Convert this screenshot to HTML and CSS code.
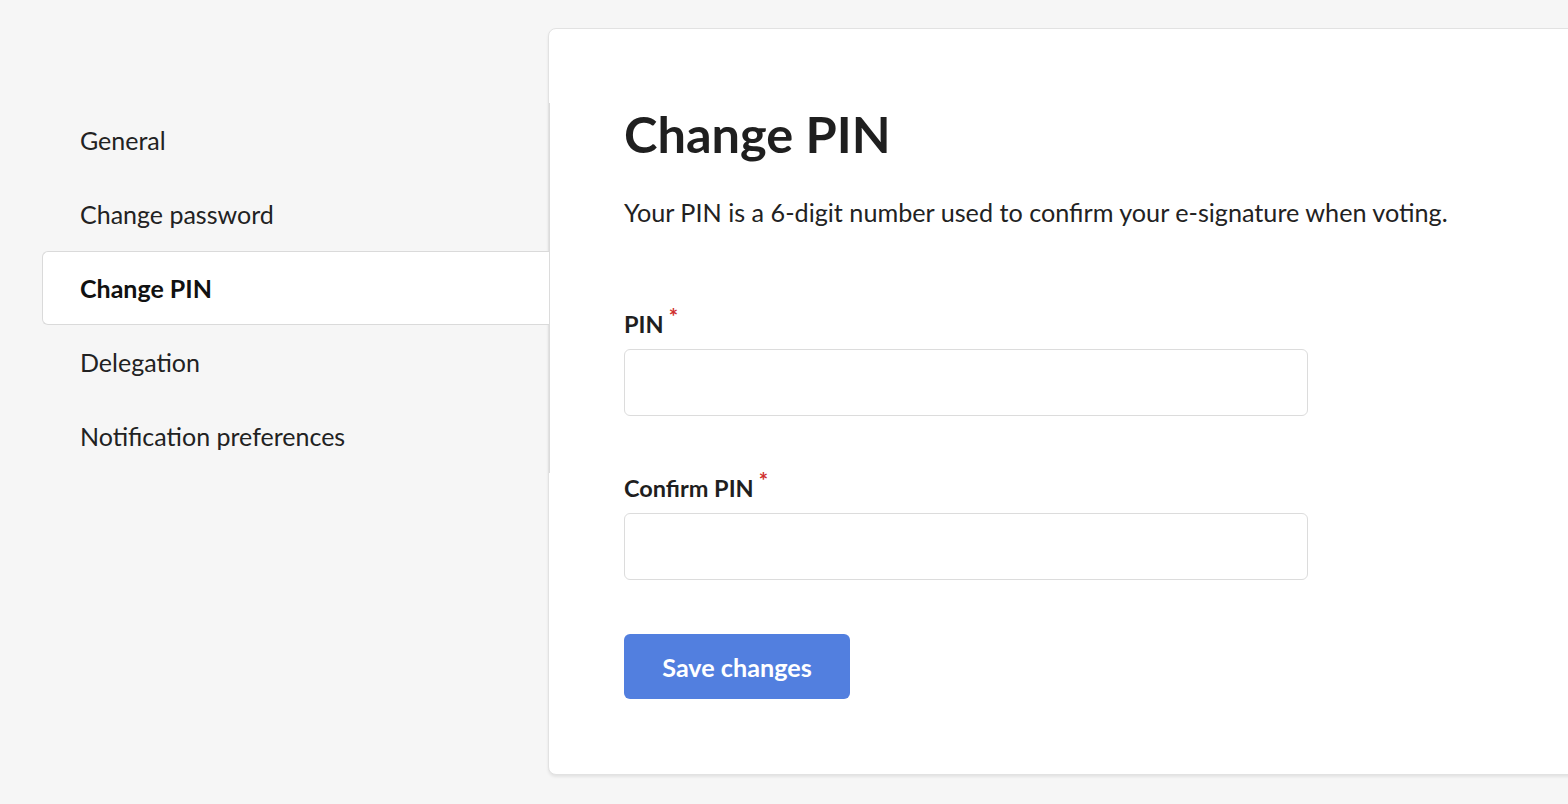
FILE: index.html
```html
<!DOCTYPE html>
<html>
<head>
<meta charset="utf-8">
<link rel="stylesheet" href="styles.css">
</head>
<body>
<div class="layout">
  <nav class="side">
    <a class="side-item">General</a>
    <a class="side-item">Change password</a>
    <a class="side-item active">Change PIN</a>
    <a class="side-item">Delegation</a>
    <a class="side-item">Notification preferences</a>
  </nav>
  <main class="card">
    <h1 class="title">Change PIN</h1>
    <p class="desc">Your PIN is a 6-digit number used to confirm your e-signature when voting.</p>
    <div class="field first">
      <label class="label">PIN<span class="req">*</span></label>
      <input class="input" type="password">
    </div>
    <div class="field">
      <label class="label">Confirm PIN<span class="req">*</span></label>
      <input class="input" type="password">
    </div>
    <button class="btn">Save changes</button>
  </main>
</div>
</body>
</html>
```
FILE: styles.css
```css
html, body {
  margin: 0;
  padding: 0;
  background: #f6f6f6;
  font-family: Lato, "Noto Sans", sans-serif;
  color: #1f1f1f;
  overflow: hidden;
  height: 804px;
}
.layout {
  display: flex;
  align-items: flex-start;
}
.side {
  flex: 0 0 auto;
  margin-left: 42px;
  margin-top: 103px;
  width: 508px;
  box-sizing: border-box;
  border-right: 1px solid #dcdcdc;
  display: flex;
  flex-direction: column;
  position: relative;
  z-index: 2;
  margin-right: -2px;
}
.side-item {
  display: block;
  height: 74px;
  line-height: 72px;
  padding-left: 37px;
  font-size: 25px;
  color: #222;
  box-sizing: border-box;
  border: 1px solid transparent;
  border-right: none;
  white-space: nowrap;
}
.side-item.active {
  background: #fff;
  border-color: #dadada;
  border-radius: 6px 0 0 6px;
  font-weight: 700;
  color: #111;
}
.card {
  flex: 0 0 auto;
  margin-top: 28px;
  width: 1060px;
  height: 747px;
  box-sizing: border-box;
  background: #fff;
  border: 1px solid #e2e2e2;
  border-radius: 8px;
  box-shadow: 0 2px 3px rgba(0,0,0,0.08);
  padding: 75px 0 0 75px;
  position: relative;
  z-index: 1;
}
.title {
  margin: 0;
  font-size: 50.5px;
  font-weight: 700;
  line-height: 60px;
  color: #1f1f1f;
}
.desc {
  margin: 33px 0 0 0;
  font-size: 25.2px;
  line-height: 30px;
  color: #222;
}
.field {
  display: flex;
  flex-direction: column;
  margin-top: 57px;
}
.field.first {
  margin-top: 82px;
}
.label {
  font-size: 23.5px;
  font-weight: 700;
  line-height: 30px;
  color: #1f1f1f;
  margin-bottom: 9px;
}
.req {
  color: #d0312d;
  font-size: 22px;
  font-weight: 700;
  position: relative;
  top: -8px;
  margin-left: 5px;
}
.input {
  width: 684px;
  height: 67px;
  box-sizing: border-box;
  border: 1px solid #dcdcdc;
  border-radius: 6px;
  background: #fff;
  outline: none;
}
.btn {
  margin-top: 54px;
  width: 226px;
  height: 65px;
  background: #527fdf;
  color: #fff;
  border: none;
  border-radius: 6px;
  font-family: Lato, "Noto Sans", sans-serif;
  font-size: 25.2px;
  font-weight: 700;
  display: block;
}
```
